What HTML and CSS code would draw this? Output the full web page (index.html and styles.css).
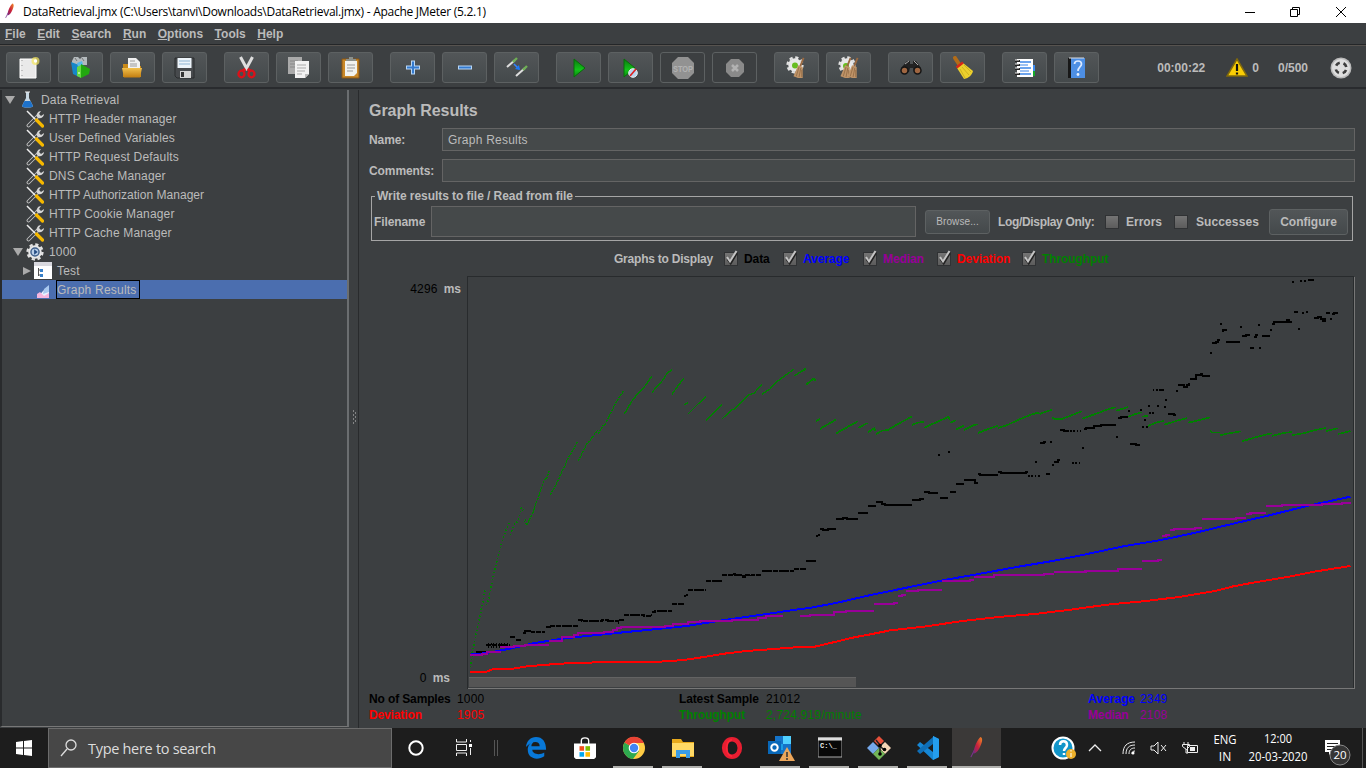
FILE: index.html
```html
<!DOCTYPE html>
<html lang="en"><head><meta charset="utf-8"><title>DataRetrieval.jmx - Apache JMeter (5.2.1)</title>
<link rel="stylesheet" href="styles.css"></head>
<body>
<svg width="0" height="0" class="defs"><defs>
<linearGradient id="fg" x1="0" y1="1" x2="1" y2="0"><stop offset="0" stop-color="#6d2a86"/><stop offset=".45" stop-color="#c9203c"/><stop offset="1" stop-color="#f08a24"/></linearGradient>
<linearGradient id="gg" x1="0" y1="0" x2="0" y2="1"><stop offset="0" stop-color="#0b7a10"/><stop offset=".6" stop-color="#13c21a"/><stop offset="1" stop-color="#0b8a10"/></linearGradient>
<linearGradient id="og" x1="0" y1="0" x2="0" y2="1"><stop offset="0" stop-color="#f2c04c"/><stop offset="1" stop-color="#c27d10"/></linearGradient>
<symbol id="feather" viewBox="0 0 16 24"><path d="M1 23 5 15" stroke="#7a3390" stroke-width="1.2"/><path d="M4 19C4 12 9 2 12 0c3 1 2 6 0 10-2 5-4 8-8 9z" fill="url(#fg)"/></symbol>
<symbol id="tools" viewBox="0 0 18 18"><path d="M2.500 15.500 12 6" stroke="#c4c4c4" stroke-width="3.800" stroke-linecap="round"/><path d="M2.500 15.500 11 7" stroke="#3c3f41" stroke-width="2" stroke-linecap="round"/><path d="M11 7c-1-3 1-6 4-6l-2 3 2 2 3-2c0 3-3 5-6 4z" fill="#d5d5d5"/><path d="M1 1 10 10" stroke="#eee" stroke-width="1.500"/><path d="M10.500 10 16.500 16" stroke="#f5b800" stroke-width="3.200" stroke-linecap="round"/></symbol>
<symbol id="gear" viewBox="0 0 20 20"><circle cx="10" cy="10" r="8.300" fill="none" stroke="#e2e2e2" stroke-width="2.600" stroke-dasharray="3.600 2.919"/><circle cx="10" cy="10" r="7.500" fill="#e8e8e8"/></symbol>
<symbol id="broom" viewBox="0 0 14 24"><path d="M12 1 8 11" stroke="#9b6a42" stroke-width="2"/><path d="M6 9l5 2 0 12-5 0-5-2z" fill="#c09468"/><path d="M7 11 4 21M9 12 7 22M10 14v8" stroke="#8c6540" stroke-width=".8"/></symbol>
<symbol id="tick" viewBox="0 0 16 16"><path d="M4 8l3 4 6-10" fill="none" stroke="#222" stroke-width="2.500" transform="translate(.7 1)"/><path d="M4 7l3 4.500L13.500 1" fill="none" stroke="#c4c4c4" stroke-width="2"/></symbol>
</defs></svg>
<header class="titlebar"><svg class="logo" width="10" height="16"><use href="#feather"/></svg><span class="apptitle">DataRetrieval.jmx (C:\Users\tanvi\Downloads\DataRetrieval.jmx) - Apache JMeter (5.2.1)</span>
<svg class="wins" width="110" height="20" fill="none" stroke="#000"><path d="M0 10.500h10M45.500 7.500h7v7h-7zM47.500 7V5.500h7v7H53M91 5l10 10M101 5 91 15"/></svg></header>
<nav class="menubar"><span><u>F</u>ile</span><span><u>E</u>dit</span><span><u>S</u>earch</span><span><u>R</u>un</span><span><u>O</u>ptions</span><span><u>T</u>ools</span><span><u>H</u>elp</span></nav>
<div class="toolbar">
<div class="grp">
<button><svg viewBox="0 0 24 24"><path d="M3 3h16v19H3z" fill="#e9e9e9" stroke="#fff"/><path d="M5 4v17" stroke="#999" stroke-dasharray="1 4"/><circle cx="18.500" cy="5" r="4" fill="#f5e760" opacity=".7"/><circle cx="18.500" cy="5" r="1.700" fill="#fff"/></svg></button>
<button><svg viewBox="0 0 24 24"><path d="M3 5 5 1h4l2 2 2-2h5v8H3z" fill="#b4babd"/><path d="M6 2l2 3M13 2l2 3" stroke="#777"/><path d="M2 6l8 3v12l-6-3z" fill="#1687c9"/><path d="M8 7l5-2 1 4-5 2z" fill="#57b9e8"/><path d="M8 11l4-2v13l-4-2z" fill="#66d942"/><path d="M12 8l9 5-1 5-8 4z" fill="#22a80f"/><path d="M10 16v2" stroke="#fff"/></svg></button>
<button><svg viewBox="0 0 24 24"><path d="M2 8h5l2 2h11v11H2z" fill="#c88918"/><path d="M7 2h8l4 4v8H7z" fill="#f1f1f1"/><path d="M9 5h5M9 8h7M9 10h7" stroke="#999"/><path d="M1 12h20l-2 9.500H3z" fill="url(#og)"/></svg></button>
<button><svg viewBox="0 0 24 24"><path d="M2 2h19v20H4l-2-2z" fill="#474a4d" stroke="#2a2c2e"/><path d="M4.500 2h14v10h-14z" fill="#edf4fa"/><path d="M6 5h11M6 8h11" stroke="#8fb4d2"/><path d="M7 15h11v7H7z" fill="#d5d5d5"/><path d="M8 16h3v5H8z" fill="#333"/></svg></button>
</div><div class="grp">
<button><svg viewBox="0 0 24 24"><path d="M5.500 1l7 13M17.500 1 10.500 14" stroke="#dedede" stroke-width="3"/><path d="M10.500 13l-3 2M12.500 13l3 2" stroke="#d71920" stroke-width="3"/><ellipse cx="6.500" cy="18" rx="3" ry="3.300" fill="none" stroke="#dc1018" stroke-width="2.300"/><ellipse cx="16.500" cy="18" rx="3" ry="3.300" fill="none" stroke="#dc1018" stroke-width="2.300"/></svg></button>
<button><svg viewBox="0 0 24 24"><path d="M1 1h14v17H1z" fill="#aaa"/><path d="M3 5h8M3 8h6M3 11h5" stroke="#888"/><path d="M8 5h14v13l-4 4H8z" fill="#f2f2f2"/><path d="M10 9h9M10 12h9M10 15h8M10 18h5" stroke="#aaa"/><path d="M18 22v-4h4z" fill="#bbb"/></svg></button>
<button><svg viewBox="0 0 24 24"><path d="M3 3h17v19H3z" fill="#c98828" stroke="#8b5714"/><path d="M6 5h12v12l-3 3H6z" fill="#f2f2ee"/><path d="M8 9h8M8 12h8M8 15h6" stroke="#999"/><path d="M7 5V3h3V1h4v2h3v2z" fill="#8d918b"/></svg></button>
</div><div class="grp">
<button><svg viewBox="0 0 24 24"><path d="M12 4.500v14M5 11.500h14" stroke="#b9d7f6" stroke-width="4"/><path d="M12 5.500v12M6 11.500h12" stroke="#347bd0" stroke-width="2"/></svg></button>
<button><svg viewBox="0 0 24 24"><path d="M5 11.500h14" stroke="#b9d7f6" stroke-width="4"/><path d="M6 11.500h12" stroke="#347bd0" stroke-width="2"/></svg></button>
<button><svg viewBox="0 0 24 24"><path d="M2 11 10 4M11 20l9-8" stroke="#ddd" stroke-width="2"/><path d="M8 6l4-4M18 14l4-4" stroke="#6faf55" stroke-width="2.400"/><path d="M9 8l5 5" stroke="#3385ff" stroke-width="1.500"/><path d="M15 14l-1-5-4 4z" fill="#1d78f5"/></svg></button>
</div><div class="grp">
<button><svg viewBox="0 0 24 24"><path d="M7 3l11 9L7 21z" fill="url(#gg)" stroke="#086c0a"/></svg></button>
<button><svg viewBox="0 0 24 24"><path d="M5 3l11 9L5 21z" fill="url(#gg)" stroke="#086c0a"/><circle cx="14" cy="17" r="4.300" fill="#b7d5ef" stroke="#eee"/><path d="M11 20l6-7" stroke="#d22" stroke-width="1.700"/></svg></button>
<button class="off"><svg viewBox="0 0 24 24"><path d="M7 1h10l6 6v10l-6 6H7l-6-6V7z" fill="#929292"/><text x="12" y="15.800" class="stop" textLength="20" lengthAdjust="spacingAndGlyphs">STOP</text></svg></button>
<button class="off"><svg viewBox="0 0 24 24"><path d="M8 3h8l5 5v8l-5 5H8l-5-5V8z" fill="#8a8a8a"/><path d="M9 9l6 6M15 9l-6 6" stroke="#b2b2b2" stroke-width="2.500"/></svg></button>
</div><div class="grp">
<button><svg viewBox="0 0 24 24"><use href="#gear" x="1" y="0" width="18" height="18"/><circle cx="10" cy="9.500" r="3" fill="#67bd20"/><use href="#broom" x="7" y="1" width="14" height="22"/></svg></button>
<button><svg viewBox="0 0 24 24"><use href="#gear" x="1" y="0" width="18" height="18"/><circle cx="9" cy="10" r="3" fill="#67bd20"/><use href="#broom" x="2" y="1" width="14" height="22"/><use href="#broom" x="9" y="1" width="14" height="22"/></svg></button>
</div><div class="grp">
<button><svg viewBox="0 0 24 24"><path d="M8 5h3v3h3V5h3l5 7v4h-7l-1-4h-3l-1 4H2v-4z" fill="#222"/><path d="M6 8l4-3M15 5l4 4" stroke="#aaa"/><circle cx="5.500" cy="14.500" r="3.500" fill="#9f6641" stroke="#151515" stroke-width="1.500"/><circle cx="18.500" cy="14.500" r="3.500" fill="#9f6641" stroke="#151515" stroke-width="1.500"/></svg></button>
<button><svg viewBox="0 0 24 24"><path d="M4 2l4 6" stroke="#b26c18" stroke-width="4" stroke-linecap="round"/><path d="M6 12l6-5 10 8c-1 4-4 7-9 8z" fill="#ecd02c"/><path d="M9 13l5 9M11 11l7 8M13 9l7 7" stroke="#c0a41c" stroke-width=".7"/><path d="M5.500 11.500l6.500-5" stroke="#d72718" stroke-width="2.600"/></svg></button>
</div><div class="grp">
<button><svg viewBox="0 0 24 24"><path d="M18 9h4v6h-4z" fill="#3e8cf0"/><path d="M18 15h4v5h-4z" fill="#15a92c"/><path d="M4 3h16v18H4z" fill="#fff"/><path d="M7 6h11M7 12h11M7 18h11" stroke="#3c86e8" stroke-width="1.500"/><path d="M7 9h8M7 15h9" stroke="#3c86e8"/><path d="M2 5h5M2 9h5M2 13h5M2 18h5" stroke="#222" stroke-width="2"/><path d="M2 4h4M2 8h4M2 12h4M2 17h4" stroke="#eee"/></svg></button>
<button><svg viewBox="0 0 24 24"><path d="M3 2h4v20H3z" fill="#181818"/><path d="M6 2h14v20H6z" fill="#4d8fe4"/><path d="M4 2h15" stroke="#ddd"/><path d="M9.500 8c0-4 7-4 7 0 0 3-3.500 3-3.500 7" fill="none" stroke="#dceaff" stroke-width="1.700"/><circle cx="13" cy="18.500" r="1.400" fill="#e8f1ff"/></svg></button>
</div>
<div class="status"><b class="clock">00:00:22</b><svg class="warn" viewBox="0 0 22 20" width="22" height="20"><path d="M11 1 21 18H1z" fill="#f9cd05" stroke="#80690c" stroke-width="1.500"/><path d="M11 6v7M11 14.500v2" stroke="#111" stroke-width="2.200"/></svg><b class="zero">0</b><b class="ratio">0/500</b><svg width="22" height="22" viewBox="0 0 22 22"><circle cx="11" cy="11" r="10.500" fill="#bababa"/><circle cx="11" cy="11" r="9" fill="#dedede"/><circle cx="11" cy="11" r="5.400" fill="none" stroke="#3d3d3d" stroke-width="2.600" stroke-dasharray="4.500 3.980" stroke-dashoffset="-2"/></svg></div>
</div>
<main class="main">
<aside class="tree">
<div class="row r0"><i class="down"></i><svg width="13" height="17" viewBox="0 0 13 17"><path d="M5 1v6L1 15c0 2 11 2 11 0L8 7V1" fill="#c8d8e3"/><path d="M3.500 10h6l2.500 5c0 2-11 2-11 0z" fill="#1d72ca"/><path d="M4 1h5" stroke="#eee"/></svg><span>Data Retrieval</span></div>
<div class="row r1"><svg width="18" height="18"><use href="#tools"/></svg><span>HTTP Header manager</span></div>
<div class="row r1"><svg width="18" height="18"><use href="#tools"/></svg><span>User Defined Variables</span></div>
<div class="row r1"><svg width="18" height="18"><use href="#tools"/></svg><span>HTTP Request Defaults</span></div>
<div class="row r1"><svg width="18" height="18"><use href="#tools"/></svg><span>DNS Cache Manager</span></div>
<div class="row r1 long"><svg width="18" height="18"><use href="#tools"/></svg><span>HTTP Authorization Manager</span></div>
<div class="row r1"><svg width="18" height="18"><use href="#tools"/></svg><span>HTTP Cookie Manager</span></div>
<div class="row r1"><svg width="18" height="18"><use href="#tools"/></svg><span>HTTP Cache Manager</span></div>
<div class="row r2"><i class="down"></i><svg width="18" height="18" viewBox="0 0 20 20"><use href="#gear"/><circle cx="10" cy="10" r="4.500" fill="#b8cee8" stroke="#3f608c" stroke-width="1.600"/><path d="M9 7l4 3-4 3z" fill="#234b82"/></svg><span>1000</span></div>
<div class="row r3"><i class="right"></i><svg width="18" height="17" viewBox="0 0 18 17"><path d="M0 0h18v17H0z" fill="#fff"/><path d="M0 0h18v4H0z" fill="#d8d8de"/><path d="M4.500 6v8M4 8h4M4 13h4" stroke="#555"/><path d="M6 7h3v3H6zM6 12h3v3H6z" fill="#377fc7"/></svg><span>Test</span></div>
<div class="row r4"><svg width="15" height="15" viewBox="0 0 15 15"><path d="M1 14 7 7l6-5v12z" fill="#eaf1ff"/><path d="M7 10l1-5 5-4v7z" fill="#a9c8ef"/><path d="M1 14v-4l3-2 4 4 5-3v5z" fill="#f6b5df"/></svg><span>Graph Results</span></div>
</aside>
<div class="split"><svg width="5" height="16"><path d="M1 1h1M3 3h1M1 5h1M3 7h1M1 9h1M3 11h1M1 13h1" stroke="#ccc"/></svg></div>
<section class="panel">
<h1>Graph Results</h1>
<div class="field"><b>Name:</b><div class="inp"><span>Graph Results</span></div></div>
<div class="field"><b>Comments:</b><div class="inp"></div></div>
<fieldset><legend>Write results to file / Read from file</legend><div class="frow"><b class="fn">Filename</b><div class="file"></div><button class="browse">Browse...</button><b class="log">Log/Display Only:</b><i class="cb"></i><b class="err">Errors</b><i class="cb"></i><b class="suc">Successes</b><button class="conf">Configure</button></div></fieldset>
<div class="graphs"><b class="gd">Graphs to Display</b>
<label class="black"><i class="cb"><svg><use href="#tick"/></svg></i>Data</label><label class="blue"><i class="cb"><svg><use href="#tick"/></svg></i>Average</label><label class="purple"><i class="cb"><svg><use href="#tick"/></svg></i>Median</label><label class="red"><i class="cb"><svg><use href="#tick"/></svg></i>Deviation</label><label class="green"><i class="cb"><svg><use href="#tick"/></svg></i>Throughput</label></div>
<div class="plotrow"><div class="axis"><div><span>4296</span><b>ms</b></div><div class="low"><span>0</span><b>ms</b></div></div>
<svg class="plot" width="888" height="414" viewBox="467 276 888 414" fill="none" shape-rendering="crispEdges">
<path d="M467.500 689V276.500H1353.500V689" stroke="#282b2d"/><path d="M468 688.500h886M1354.500 277v412" stroke="#777"/>
<rect x="469" y="677" width="387" height="10" rx="1" fill="#555"/><path d="M469 677.500h387" stroke="#636363"/>
<g transform="translate(460 350) scale(.333333)">
<g stroke="#008000" stroke-width="4"><path stroke-width="5" stroke-dasharray="4 7" d="M31 952l6-44 7-35 5-24 10-46 7-34 5-26 6-30M79 766l8-23 11-55 11-50 16-58 13-39 10-26M151 555l10-31 8-3 8-19 7-29 6 8M193 516l3-9 4 18"/>
<path stroke-dasharray="7 2" d="M200 525l18-36 15-42 20-58 7-3 9-26M271 435l19-36 16-34 20-43 26-45M355 333l24-49 18-22 16-22M415 252l14-26 6-1 20-43 16-30 19-28"/>
<path d="M493 192l20-35 20-26 20-20 22-32M576 127l18-21 13-14 15-23 14-10M636 133l16-23 19-25M672 164l12-6M684 192l26-26 27-26M738 211l47-47M786 207l27-26 13-5 38-41 18-5 23-27M905 133l25-16 18-20 27-20 26-19M1002 77l15-8 20-14M1038 103l22-17 7 4"/></g>
<g stroke="#000" stroke-width="6"><path stroke-dasharray="15 2" d="M48 905h14v2h15M79 886h70M150 860h16M168 870h18M188 848h6v-6h22v5h40M258 831h12v-4h84M354 811h12v2h60v-3h18v3h30v3M476 811h16M492 795h60v2h18v-3h6M576 786h8v-3h52M636 762h36M684 720h54M738 692h48M786 675h30v-2h8v3h25v4h5v-6h20v2h30M905 664h96M1002 657h34M1038 632h30"/><path stroke-dasharray="3 5" d="M84 881h60M84 890h54M474 819h10"/><path d="M672 738h6M678 735h6"/></g>
<path stroke="#00f" stroke-width="6" d="M30 914 80 909 150 896 220 880 300 867 380 858 480 848 560 840 680 828 780 812 900 795 1000 780 1020 777"/>
<path stroke="#909" stroke-width="6" d="M30 914h36v-3h15v-4h42M120 891h42v-3h34v-4h72M268 873h38v-12h36v-6h12v-6h78v-3h26v-6h12v-6h12v-3h134v-4h24v-6h44v-4h36v-3h96v-3h78v-6h24v-6h50"/>
<path stroke="#f00" stroke-width="6" d="M30 967 78 966 100 957 160 956 200 949 300 941 440 936H585L660 931 700 926 800 910 860 903 940 897 1020 891"/></g>
<g transform="translate(800 270) scale(.36098 .333333)">
<path stroke="#008000" stroke-width="5" d="M0 306l17-10M18 343l20-17 6 6M44 453l11-6M55 477l22-14 22-14M100 490l60-36M162 473l25-14M188 487l18-12 3 9M211 492l16-10 16-2 35-22 32-18M310 465l13-6 20-4M344 473l33-16 34-16 5 8M416 458l15-7M432 478l22-11M454 480l27-15 11-2M493 489l28-12 28-10M549 474l26-9 28-15 32-14 20-7 11 2 32-12M698 446l6-4M704 448h18l30-12 28-12M782 446l36-14 37-15 20-5M876 422l33-11M910 440l22-9 14-4M948 440l15-3M964 468l25-11 19-4M1009 464l33-11 31-9M1075 458l22-5 39-11M1136 482l5 6h23M1164 496l28-7 31-5M1224 514l47-15 36-9M1308 498l30-9 24-3M1364 495l30-5 29-9 34-7M1458 483l31-8M1490 492l35-9"/>
<g stroke="#000" stroke-width="5.500"><path d="M0 897h17M17 873h27M44 798h6M49 795h6M55 776h8v3h15v-2h22M100 746h20v-2h10v3h31M161 730h27M188 708h23M211 696h16v6h8v3h75M310 690h23v-3h11M344 666h12v2h26M388 684h22M416 666h16M432 642h22M454 631h32v7h7M493 612h6v3h50M549 606h8v3h70v-3h4M665 519h10v-3h6M681 612h12M698 585h6M703 576h11v-6h6M721 480h11v3h14M787 477h6v-3h22v-5h20v-3h40M882 445h8v-3h19M915 522h15v3h12M997 360h11M1019 432h16v3h7M1042 363h5M1047 345h18v6h8v-6h5v-6M1080 326h17v-10h13v-5h5v6h20M1141 219h11v-4h6v-5h5M1170 183h3v-4h6v4M1180 216h38M1224 198h12v-3h10M1247 234h11M1258 201h5v-6h6M1280 198h22M1302 180h6M1308 162h5v-5h36v-6h6v5h8M1369 126h11M1424 144h12v-4h7v6h7v6h4v-8M1457 129h11M1474 132h6v-3h10M1407 29h17"/>
<path stroke-dasharray="5 4" d="M632 617h32M651 576h8M748 483h30M754 579h24M964 408h8M989 408h8M967 429h16M977 359h20M1011 390h8M1008 411h8M1269 165h8M1272 234h8"/>
<path d="M382 555h6M410 546h6M693 516h6M781 534h6M875 501h6M908 423h6M942 420h6M953 450h6M947 471h6M959 471h6M1136 249h5M1164 162h5M1219 171h5M1363 36h6M1385 33h6M1396 33h6M1391 129h5M1402 126h5M1380 177h6M1468 147h6"/></g>
<path stroke="#00f" stroke-width="6" d="M0 1017 20 1015 100 999 200 974 300 952 400 930 500 911 600 891 700 873 800 851 900 828 1000 810 1100 787 1200 761 1300 736 1400 709 1525 680"/>
<path stroke="#909" stroke-width="6" d="M0 1038h27v-3h67v-9h34v-3h78M205 1002h55v-3h12M272 978h11v-3h11M294 962h33v-2h67M394 933h78v-3h10M482 920h56v-6h138v-2h28M704 907h87v-4h90v-7h66M947 872h44v-2h12M1003 799h11v-4h12M1026 780h10v-4h58v-2h20M1114 746h94v-2h28M1236 732h12v-3h44M1292 709h44v-4h110v-3h56v-4h24"/>
<path stroke="#f00" stroke-width="6" d="M0 1131H37L100 1115 150 1102 200 1092 250 1081 350 1069 450 1053 550 1041 650 1032 750 1019 850 1004 950 994 1050 981 1150 963 1200 949 1250 939 1350 921 1430 904 1525 888"/></g>
</svg></div>
<div class="stats"><b>No of Samples</b><span>1000</span><b>Latest Sample</b><span>21012</span><b class="blue">Average</b><span class="blue">2349</span><b class="red">Deviation</b><span class="red">1905</span><b class="green">Throughput</b><span class="green">2,724.919/minute</span><b class="purple">Median</b><span class="purple">2108</span></div>
</section></main>
<footer class="taskbar">
<div class="c48"><svg width="16" height="16"><path d="M0 2l7-1v6.500H0zM8 1l8-1v7.500H8zM0 8.500h7V15l-7-1zM8 8.500h8V16l-8-1z" fill="#fff"/></svg></div>
<div class="search"><svg width="18" height="18" fill="none" stroke="#ddd" stroke-width="1.300"><circle cx="11" cy="6" r="5"/><path d="M7 10l-6 7"/></svg><span>Type here to search</span></div>
<div class="c48"><svg width="18" height="18"><circle cx="9" cy="9" r="6.700" fill="none" stroke="#fff" stroke-width="2"/></svg></div>
<div class="c48"><svg width="18" height="18" fill="none" stroke="#eee"><path d="M1.500 0v3h10V0M1.500 5.500h10v6h-10zM1.500 17v-3h10v3M15.500 1v2M15.500 9v7"/><path d="M14 5h3v3h-3z" fill="#fff" stroke="none"/></svg></div>
<i class="bars"></i>
<div class="app"><svg viewBox="0 0 24 24"><path d="M1 11C2 4 6 0 12 0c7 0 11 5 11 14H8c0 5 8 6 13 3v4c-7 5-18 3-18-7 0-5 3-8 7-9-2 2-3 3-3 5h9c0-7-10-5-15 1z" fill="#0878d8"/></svg></div>
<div class="app"><svg viewBox="0 0 24 24"><path d="M8 8V4c0-4 8-4 8 0v4" fill="none" stroke="#fff" stroke-width="1.500"/><path d="M0 7h24v15l-2 2H2l-2-2z" fill="#fff"/><path d="M6 10h5v5H6z" fill="#f34f1c"/><path d="M12.500 10h5v5h-5z" fill="#7fbc00"/><path d="M6 16.500h5v5H6z" fill="#01a6f0"/><path d="M12.500 16.500h5v5h-5z" fill="#ffba01"/></svg></div>
<div class="app on"><svg viewBox="0 0 24 24"><circle cx="12" cy="12" r="11" fill="#fc4"/><path d="M12 12 2.500 6.500A11 11 0 0 0 11 23l6-8z" fill="#2da94f"/><path d="M12 12 2.500 6.500A11 11 0 0 1 22 7H12z" fill="#e84335"/><circle cx="12" cy="12" r="5.300" fill="#fff"/><circle cx="12" cy="12" r="4.200" fill="#4285f4"/></svg></div>
<div class="app on"><svg viewBox="0 0 24 24"><path d="M1 3h9l2 3h11v15H1z" fill="#e7a91c"/><path d="M1 7h22v13H1z" fill="#ffd965"/><path d="M5 22v-8h14v8h-4v-4H9v4z" fill="#3a9ce5"/></svg></div>
<div class="app"><svg viewBox="0 0 24 24"><ellipse cx="12" cy="12" rx="8.500" ry="9.500" fill="none" stroke="#e81e31" stroke-width="5"/><path d="M12 3c-7 0-8 17 0 18" fill="none" stroke="#ff2638" stroke-width="2"/></svg></div>
<div class="app on"><svg class="big" viewBox="0 0 28 26"><path d="M8 1h16v18H8z" fill="#1473c8"/><path d="M16 1h8v8h-8z" fill="#50d0ff"/><path d="M8 9h8v6H8z" fill="#1a9de5"/><path d="M1 6h13v13H1z" fill="#0868b9"/><circle cx="7.500" cy="12.500" r="3.200" fill="none" stroke="#fff" stroke-width="2"/><path d="M20 12l8 14H12z" fill="#eda65a"/><path d="M20 17v5M20 23v2" stroke="#333" stroke-width="1.500"/></svg></div>
<div class="app on"><svg viewBox="0 0 24 24"><path d="M0 2h24v19H0z" fill="#080808" stroke="#aaa"/><path d="M0 3h24" stroke="#ddd" stroke-width="3"/><text x="2" y="12" class="cmd">C:\_</text></svg></div>
<div class="app on"><svg viewBox="0 0 24 24"><path d="M12 0l5 5-5 5-5-5z" fill="#e8503a"/><path d="M6 6l6 6-6 6-6-6z" fill="#75a8ea"/><path d="M18 6l6 6-6 6-6-6z" fill="#f4d5b5"/><path d="M12 12l6 6-6 6-6-6z" fill="#72b457"/><path d="M9 4l4 5v9M13 10l4 4" fill="none" stroke="#222" stroke-width="1.500"/><circle cx="13" cy="9.500" r="1.800"/><circle cx="13" cy="18" r="1.800"/><circle cx="17.500" cy="13.500" r="1.800"/></svg></div>
<div class="app on"><svg viewBox="0 0 24 24"><path d="M17 0l6 3v18l-6 3L1 9l3-3 13 10z" fill="#1687d5"/><path d="M17 0l6 3v18l-6 3z" fill="#249eef"/><path d="M1 15 17 1v7L4 18z" fill="#0f6fb7"/></svg></div>
<div class="app on cur"><svg viewBox="0 0 16 24"><use href="#feather"/></svg></div>
<svg class="tray" width="366" height="40" fill="none" stroke="#eee"><circle cx="63" cy="20" r="10.500" fill="#1295c9" stroke="#fff" stroke-width="2"/><path d="M60 17c0-5 7-5 7 0 0 3-3 3-3 6M64 25v2" stroke="#fff" stroke-width="2.500"/><circle cx="71" cy="26" r="5" fill="#edb02b" stroke="none"/><path d="M71 25v4M71 22v1.500" stroke="#fff"/>
<path d="M89 23l6-6 6 6" stroke-width="1.300"/><path d="M123 26c0-8 4-12 12-12M126 26c0-6 3-9 9-9M129 26c0-4 2-6 6-6M132 26c0-2 1-3 3-3"/><circle cx="133" cy="25" r="1.500" fill="#fff" stroke="none"/><path d="M151 18h3l4-4v12l-4-4h-3zM161 17l5 6M166 17l-5 6"/><path d="M187.500 17.500h10v7h-10zM184 14v3M188 14v3M182.500 16.500h7v2l-3 3-4-3zM186 21v4h2"/><path d="M190 19h5v4h-5z" fill="#eee" stroke="none"/>
<path d="M325 12h15v12h-8l-3 3v-3h-4z" fill="#fff" stroke="none"/><path d="M327 15.500h11M327 18.500h11M327 21.500h8" stroke="#222"/><circle cx="340" cy="27" r="10" fill="#353535" stroke="#888"/><text x="340" y="31" class="n">20</text><path d="M362.500 0v40" stroke="#555"/>
<text class="t" x="225" y="16" textLength="23" lengthAdjust="spacingAndGlyphs">ENG</text><text class="t" x="225" y="33">IN</text><text class="t" x="278" y="15" textLength="28" lengthAdjust="spacingAndGlyphs">12:00</text><text class="t" x="278" y="33" textLength="59" lengthAdjust="spacingAndGlyphs">20-03-2020</text></svg>
</footer>
</body></html>
```
FILE: styles.css
```css
*{box-sizing:border-box}
body{margin:0;width:1366px;height:768px;overflow:hidden;background:#3c3f41;color:#bbb;font:12px/16px "Liberation Sans",Arial,sans-serif}
.defs{position:absolute}
svg{display:block;flex:none}
i{display:block;flex:none;font-style:normal}
.titlebar{height:23px;background:#fff;color:#000;display:flex;align-items:center;font:12px/16px "Open Sans",sans-serif;padding-left:5px}
.logo{margin-right:8px;margin-bottom:2px}
.apptitle{letter-spacing:-.27px;white-space:nowrap}
.wins{margin-left:auto;margin-right:11px}
.menubar{height:22px;display:flex;gap:11.5px;padding:0 5px;align-items:center;border-bottom:1px solid #242628;font-weight:bold}
.toolbar{height:44px;border-top:1px solid #57534f;border-bottom:2px solid #292b2e;padding:6px 14px 0 6px;display:flex;gap:17px}
.grp{display:flex;gap:7px}
button{font-family:inherit;color:#bbb;background:linear-gradient(#525658,#44494b);border:1px solid #5d6162;border-radius:3px;padding:0;margin:0}
.grp button{width:45px;height:31px;display:grid;place-items:center}
.grp button svg{width:24px;height:24px}
.grp .off{background:#3c3f41}
.stop{font:bold 9px "Liberation Sans",sans-serif;fill:#b2b2b2;text-anchor:middle}
.status{display:flex;align-items:center;margin-left:auto;height:31px}
.clock{margin-right:21px}.warn{margin-right:4px}.zero{margin-right:19px}.ratio{margin-right:22px}
.main{height:639px;display:flex;padding-top:1px}
.tree{width:349px;border-left:2px solid #292b2d;border-right:2px solid #6b6e70;border-bottom:1px solid #777;height:637px}
.row{height:19px;display:flex;align-items:center;white-space:nowrap}
.row span{letter-spacing:.16px}.long span{letter-spacing:.02px}
.down{border:5px solid transparent;border-top:8px solid #aaa;border-bottom:0}
.right{border:4px solid transparent;border-left:8px solid #aaa;border-right:0}
.r0{padding-left:3px}.r0 svg{margin:0 7px 0 6px}
.r1{padding-left:24px}.r1 svg{margin-right:5px}
.r2{padding-left:11px}.r2 svg{margin:0 5px 0 3px}
.r3{padding-left:21px}.r3 svg{margin:0 5px 0 3px}
.r4{padding-left:34px;background:#4b6eaf}.r4 svg{margin-right:5px;margin-top:4px}
.r4 span{height:19px;line-height:18px;border:1px solid #000;width:84px;letter-spacing:.22px}
.split{width:10px;border-right:1px solid #292b2d;display:grid;place-items:center;padding:18px 0 0 1px}
.panel{width:1007px;padding:0 11px 0 10px}
h1{font:bold 16px/20px "Liberation Sans",sans-serif;letter-spacing:-.05px;margin:11px 0 7px}
.field{display:flex;height:23px;margin-bottom:8px;align-items:center}
.field b{width:73px;letter-spacing:-.08px}
.inp{flex:1;height:23px;background:#45494a;border:1px solid #646464;padding:3px 5px}
.inp span{letter-spacing:.24px}
fieldset{margin:-2px 2px 0;padding:0 4px 0 2px;border:1px solid #a5a5a5;height:53px;min-width:0}
legend{font-weight:bold;padding:0 2px;margin-left:1px;line-height:16px;letter-spacing:-.05px}
.frow{display:flex;align-items:center;height:31px;margin-top:2px;white-space:nowrap}
.frow>*{flex:none}
.fn{width:57px;letter-spacing:-.1px}.file{width:485px;height:31px;background:#45494a;border:1px solid #646464;margin-right:9px}
.browse{width:65px;height:24px;font-size:10px;letter-spacing:.1px}
.log{margin-left:8px;width:107px;letter-spacing:-.33px}.err{width:48px;margin-left:7px}.suc{width:73px;margin-left:8px;letter-spacing:.1px}
.cb{width:14px;height:14px;background:linear-gradient(#747474,#5c5c5c);border:1px solid #303234}
.conf{width:79px;height:26px;font-weight:bold;font-size:12px}
.graphs{display:flex;align-items:center;margin:10px 0 0 245px;height:16px;font-weight:bold;white-space:nowrap}
.gd{width:110px;letter-spacing:-.22px}
.graphs label{display:flex;align-items:center;letter-spacing:-.1px}
.graphs .cb{margin-right:6px}.graphs .cb svg{width:16px;height:16px;margin:-3px 0 0 -2px;overflow:visible}
.black{width:59px;color:#000}label.blue{width:80px}label.purple{width:74px}label.red{width:85px}
.blue{color:#00f}.red{color:#f00}.purple{color:#909}.green{color:#008000}
.plotrow{display:flex;height:414px;margin-top:9px}
.axis{width:98px;display:flex;flex-direction:column;justify-content:space-between;padding:5px 6px 4px 0}
.axis div{display:flex;justify-content:flex-end;gap:6px}.axis span{color:#000;letter-spacing:.2px}.axis .low{padding-right:11px}
.stats{display:grid;grid-template-columns:88px 222px 87px 322px 52px 70px;grid-auto-rows:16px;color:#000;margin-top:1px;white-space:nowrap}
.stats .blue{color:#00f}.stats .red{color:#f00}.stats .purple{color:#909}.stats .green{color:#008000}
.stats b{letter-spacing:-.13px}.stats b.blue{letter-spacing:0}
.stats span{letter-spacing:.2px}
.taskbar{height:40px;background:#1d1d1d;display:flex}
.c48{width:48px;display:grid;place-items:center}
.search{width:344px;background:#474747;border:1px solid #6c6c6c;display:flex;align-items:center;gap:10px;padding-left:11px;color:#ddd;font:14.500px "Open Sans",sans-serif;letter-spacing:-.3px}
.bars{width:4px;height:16px;border:1px solid #555;border-width:0 1px;margin:12px 13px 0 6px}
.app{width:49px;display:grid;place-items:center}
.app svg{width:22px;height:22px}.app .big{width:28px;height:26px}
.on{background:linear-gradient(#b0b0ad,#b0b0ad) 4px 38px/40px 2px no-repeat}
.on svg{width:24px;height:24px}
.cur{background:linear-gradient(#b0b0ad,#b0b0ad) 0 38px/49px 2px no-repeat #3b3938}
.cur svg{height:21px;margin-bottom:2px}
.tray{margin-left:-1px}
.cmd{font:bold 7px "Liberation Mono",monospace;fill:#eee}
.t,.n{font:12px "Open Sans",sans-serif;fill:#fff;stroke:none;text-anchor:middle}
.n{font-size:11.500px}
```
